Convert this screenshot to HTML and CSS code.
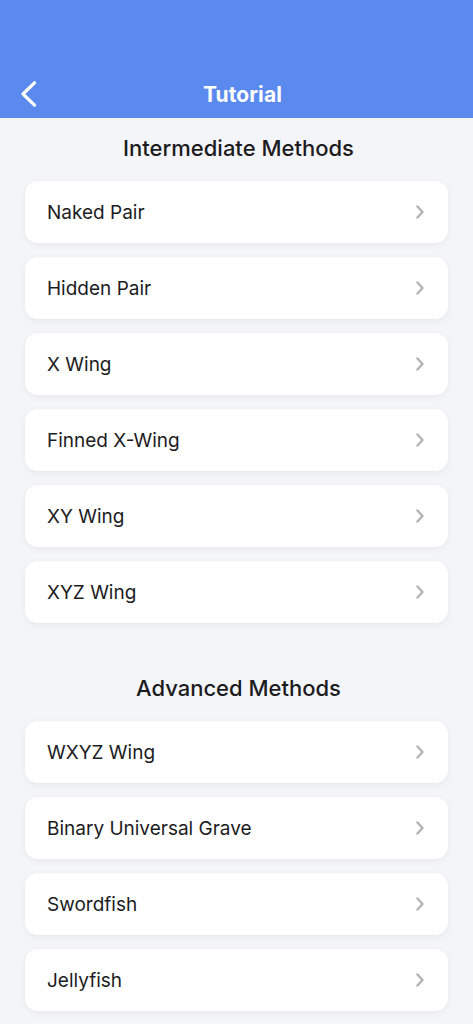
FILE: index.html
```html
<!DOCTYPE html>
<html>
<head>
<meta charset="utf-8">
<link rel="stylesheet" href="styles.css">
</head>
<body>
<header class="topbar">
  <button class="back" aria-label="Back">
    <svg width="18" height="26" viewBox="0 0 18 26"><path d="M14.5 1.8 L3 13 L14.5 24.2" fill="none" stroke="#fff" stroke-width="3.2" stroke-linecap="round" stroke-linejoin="round"/></svg>
  </button>
  <h1 class="title">Tutorial</h1>
</header>
<main class="content">
  <section class="section">
    <h2 class="section-title">Intermediate Methods</h2>
    <ul class="list">
      <li class="item"><span>Naked Pair</span><svg class="chev" width="10" height="14" viewBox="0 0 10 14"><path d="M2.5 1.5 L7.5 7 L2.5 12.5" fill="none" stroke="#b3b3b8" stroke-width="2.4" stroke-linecap="round" stroke-linejoin="round"/></svg></li>
      <li class="item"><span>Hidden Pair</span><svg class="chev" width="10" height="14" viewBox="0 0 10 14"><path d="M2.5 1.5 L7.5 7 L2.5 12.5" fill="none" stroke="#b3b3b8" stroke-width="2.4" stroke-linecap="round" stroke-linejoin="round"/></svg></li>
      <li class="item"><span>X Wing</span><svg class="chev" width="10" height="14" viewBox="0 0 10 14"><path d="M2.5 1.5 L7.5 7 L2.5 12.5" fill="none" stroke="#b3b3b8" stroke-width="2.4" stroke-linecap="round" stroke-linejoin="round"/></svg></li>
      <li class="item"><span>Finned X-Wing</span><svg class="chev" width="10" height="14" viewBox="0 0 10 14"><path d="M2.5 1.5 L7.5 7 L2.5 12.5" fill="none" stroke="#b3b3b8" stroke-width="2.4" stroke-linecap="round" stroke-linejoin="round"/></svg></li>
      <li class="item"><span>XY Wing</span><svg class="chev" width="10" height="14" viewBox="0 0 10 14"><path d="M2.5 1.5 L7.5 7 L2.5 12.5" fill="none" stroke="#b3b3b8" stroke-width="2.4" stroke-linecap="round" stroke-linejoin="round"/></svg></li>
      <li class="item"><span>XYZ Wing</span><svg class="chev" width="10" height="14" viewBox="0 0 10 14"><path d="M2.5 1.5 L7.5 7 L2.5 12.5" fill="none" stroke="#b3b3b8" stroke-width="2.4" stroke-linecap="round" stroke-linejoin="round"/></svg></li>
    </ul>
  </section>
  <section class="section section-next">
    <h2 class="section-title">Advanced Methods</h2>
    <ul class="list">
      <li class="item"><span>WXYZ Wing</span><svg class="chev" width="10" height="14" viewBox="0 0 10 14"><path d="M2.5 1.5 L7.5 7 L2.5 12.5" fill="none" stroke="#b3b3b8" stroke-width="2.4" stroke-linecap="round" stroke-linejoin="round"/></svg></li>
      <li class="item"><span>Binary Universal Grave</span><svg class="chev" width="10" height="14" viewBox="0 0 10 14"><path d="M2.5 1.5 L7.5 7 L2.5 12.5" fill="none" stroke="#b3b3b8" stroke-width="2.4" stroke-linecap="round" stroke-linejoin="round"/></svg></li>
      <li class="item"><span>Swordfish</span><svg class="chev" width="10" height="14" viewBox="0 0 10 14"><path d="M2.5 1.5 L7.5 7 L2.5 12.5" fill="none" stroke="#b3b3b8" stroke-width="2.4" stroke-linecap="round" stroke-linejoin="round"/></svg></li>
      <li class="item"><span>Jellyfish</span><svg class="chev" width="10" height="14" viewBox="0 0 10 14"><path d="M2.5 1.5 L7.5 7 L2.5 12.5" fill="none" stroke="#b3b3b8" stroke-width="2.4" stroke-linecap="round" stroke-linejoin="round"/></svg></li>
    </ul>
  </section>
</main>
</body>
</html>
```
FILE: styles.css
```css
* { box-sizing: border-box; }
html, body {
  margin: 0;
  padding: 0;
  background: #f4f5f9;
  font-family: Inter, "Noto Sans", "Liberation Sans", sans-serif;
  color: #1c1c1e;
}
.topbar {
  height: 118px;
  background: #5b8aef;
  display: flex;
  align-items: flex-end;
  justify-content: center;
  padding: 0 0 8px 12px;
  position: relative;
}
.back {
  position: absolute;
  left: 20px;
  bottom: 11px;
  border: 0;
  background: none;
  padding: 0;
  display: flex;
}
.title {
  margin: 0;
  color: #fff;
  font-size: 21px;
  font-weight: 700;
  line-height: 30px;
  letter-spacing: 0.1px;
}
.content {
  padding: 15px 25px 20px;
}
.section-next {
  margin-top: 50px;
}
.section-title {
  margin: 0 0 18px;
  padding-left: 4px;
  text-align: center;
  font-size: 22px;
  font-weight: 500;
  line-height: 30px;
  color: #1c1c1e;
}
.list {
  list-style: none;
  margin: 0;
  padding: 0;
  display: flex;
  flex-direction: column;
  gap: 14px;
}
.item {
  height: 62px;
  background: #fff;
  border-radius: 13px;
  box-shadow: 0 2px 6px rgba(0, 0, 0, 0.06);
  display: flex;
  align-items: center;
  justify-content: space-between;
  padding: 0 23px 0 22px;
  font-size: 19px;
  color: #1c1c1e;
}
.chev { display: block; }
```
